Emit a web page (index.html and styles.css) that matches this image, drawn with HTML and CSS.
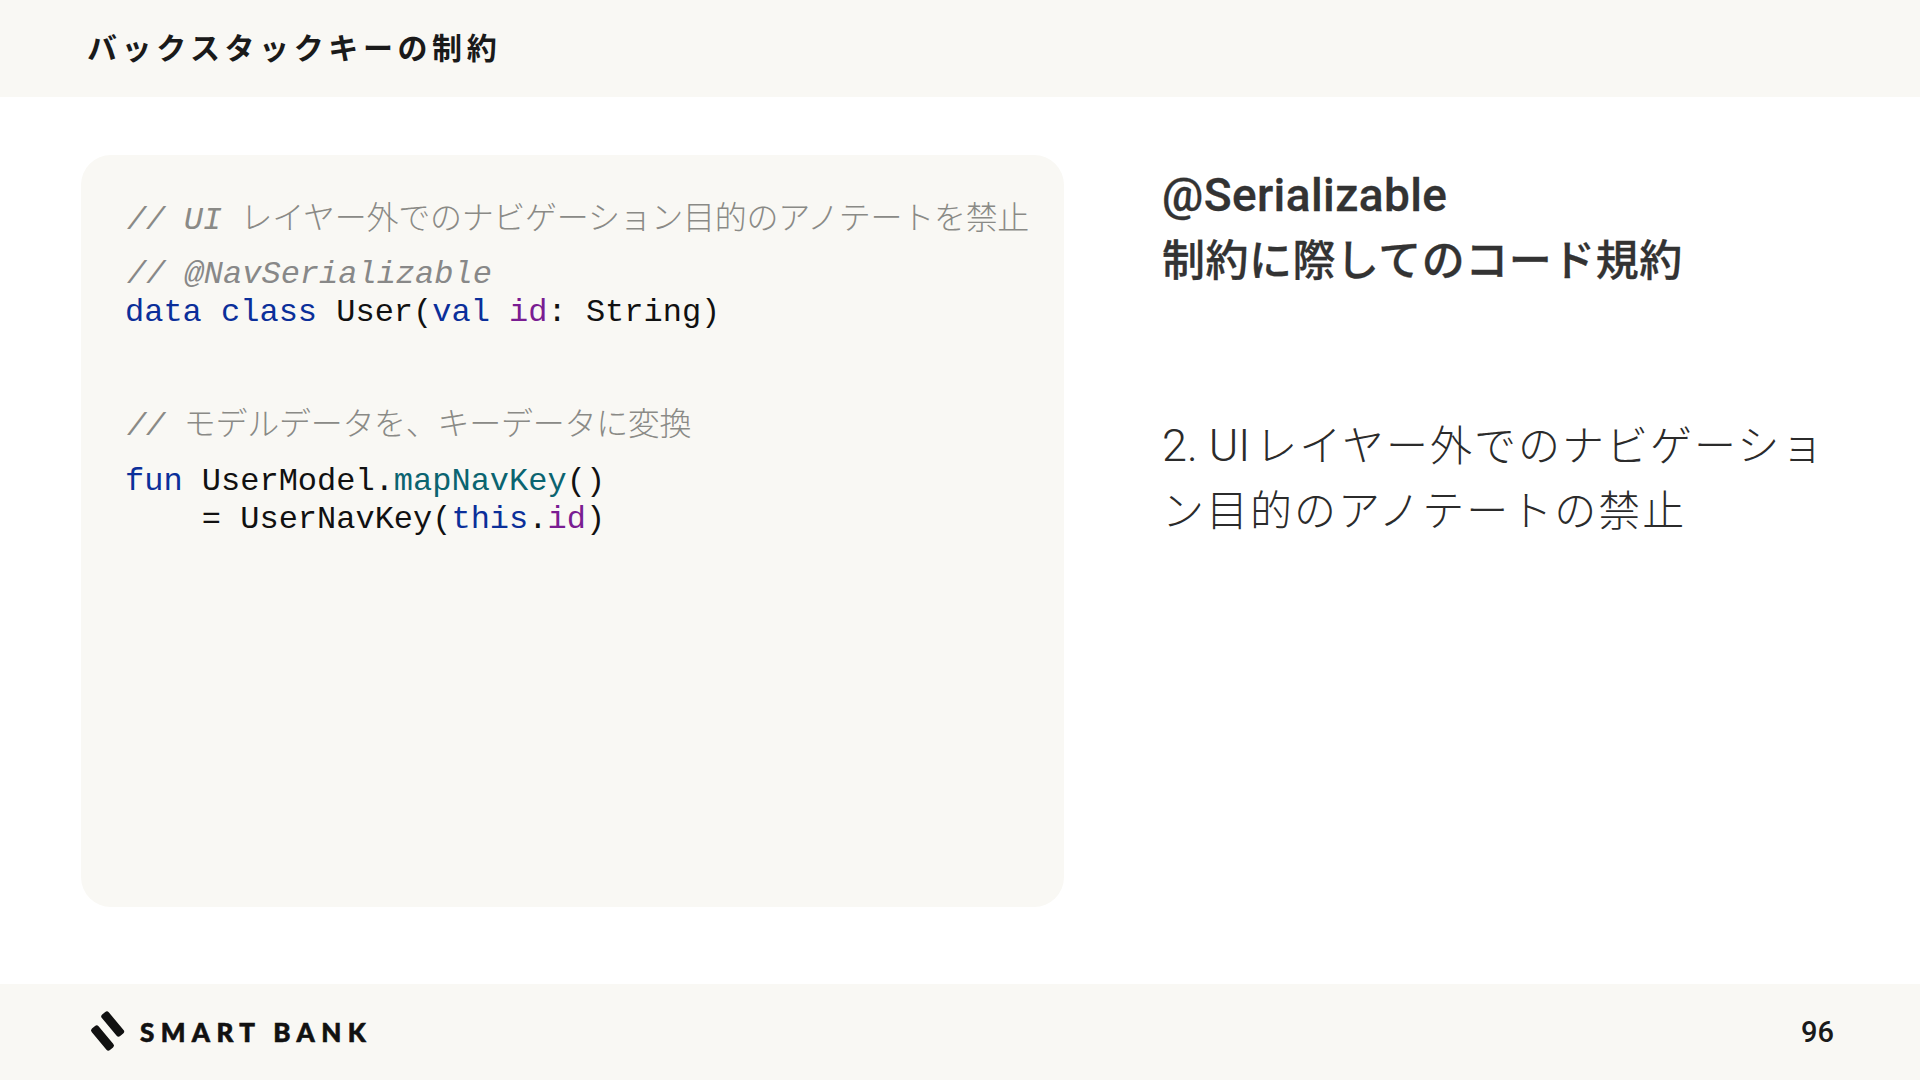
FILE: index.html
```html
<!DOCTYPE html>
<html lang="ja">
<head>
<meta charset="utf-8">
<title>バックスタックキーの制約</title>
<link rel="stylesheet" href="styles.css">
</head>
<body>
<div class="slide">
  <header class="top"><h1 class="title">バックスタックキーの制約</h1></header>
  <main class="content">
    <section class="card">
      <div class="line jp-comment"><span class="slash">// </span><span class="slash">UI</span> レイヤー外でのナビゲーション目的のアノテートを禁止</div>
      <div class="line gap-a comment">// @NavSerializable</div>
      <div class="line"><span class="kw">data class</span> User(<span class="kw">val</span> <span class="prop">id</span>: String)</div>
      <div class="line gap-b jp-comment"><span class="slash">// </span>モデルデータを、キーデータに変換</div>
      <div class="line gap-c"><span class="kw">fun</span> UserModel.<span class="fn">mapNavKey</span>()</div>
      <div class="line">    = UserNavKey(<span class="kw">this</span>.<span class="prop">id</span>)</div>
    </section>
    <section class="side">
      <h2 class="heading"><span class="row heading-latin">@Serializable</span><span class="row">制約に際してのコード規約</span></h2>
      <p class="body"><span class="row"><span class="latin">2. UI</span>レイヤー外でのナビゲーショ</span><span class="row">ン目的のアノテートの禁止</span></p>
    </section>
  </main>
  <footer class="bottom">
    <div class="logo">
      <svg class="mark" width="36" height="42" viewBox="0 0 36 42" aria-hidden="true">
        <rect x="18.2" y="-1" width="9" height="28" rx="2.5" transform="rotate(-40 22.7 13)" fill="#111"/>
        <rect x="8" y="13" width="9" height="28" rx="2.5" transform="rotate(-40 12.5 27)" fill="#111"/>
      </svg>
      <span class="brand">SMART BANK</span>
    </div>
    <span class="page">96</span>
  </footer>
</div>
</body>
</html>
```
FILE: styles.css
```css
* { box-sizing: border-box; }
html, body { margin: 0; padding: 0; background: #fff; }
.slide { width: 1920px; height: 1080px; display: flex; flex-direction: column; overflow: hidden; font-family: Roboto, "Noto Sans CJK JP", sans-serif; }
.top { height: 97px; flex: none; background: #f9f8f4; display: flex; align-items: center; padding: 0 0 6px 87px; }
.title { margin: 0; font-family: "Noto Sans CJK JP", sans-serif; font-size: 30px; font-weight: 700; letter-spacing: 4.6px; color: #1a1a1a; line-height: 1; }
.content { flex: 1; display: flex; padding: 58px 0 0 81px; }
.card { width: 983px; height: 752px; background: #f9f8f4; border-radius: 30px; padding: 47px 0 0 44px; flex: none; }
.line { font-family: "Liberation Mono", monospace; font-size: 32px; line-height: 38px; height: 38px; white-space: pre; color: #111; }
.comment { color: #888; font-style: italic; padding-left: 2px; }
.jp-comment { color: #8a8a86; font-family: "Liberation Mono", "Noto Sans CJK JP", monospace; font-weight: 300; letter-spacing: -0.28px; padding-left: 2px; }
.slash { font-style: italic; }
.kw { color: #0b2f9a; }
.prop { color: #7a1d92; }
.fn { color: #0b6470; }
.gap-a { margin-top: 16px; }
.gap-b { margin-top: 76px; }
.gap-c { margin-top: 17px; }
.side { margin-left: 98px; padding-top: 7px; color: #333; }
.row { display: block; white-space: nowrap; height: 66px; }
.heading { margin: 0; font-size: 43px; font-weight: 500; line-height: 66px; letter-spacing: 0.5px; -webkit-text-stroke: 0.3px #333; }
.heading-latin { font-size: 46px; letter-spacing: 0.4px; }
.body { margin: 119px 0 0; font-size: 42px; font-weight: 300; line-height: 66px; letter-spacing: 2px; color: #2b2b2b; }
.latin { letter-spacing: 0; font-size: 45px; margin-right: 5px; }
.bottom { height: 96px; flex: none; background: #f9f8f4; display: flex; align-items: center; justify-content: space-between; padding: 0 86px 0 90px; }
.logo { display: flex; align-items: center; gap: 14px; }
.brand { font-family: Lato, sans-serif; font-weight: 900; font-size: 26px; letter-spacing: 6.4px; color: #111; -webkit-text-stroke: 0.6px #111; }
.page { font-family: Roboto, sans-serif; font-size: 29px; font-weight: 500; color: #1a1a1a; }
```
